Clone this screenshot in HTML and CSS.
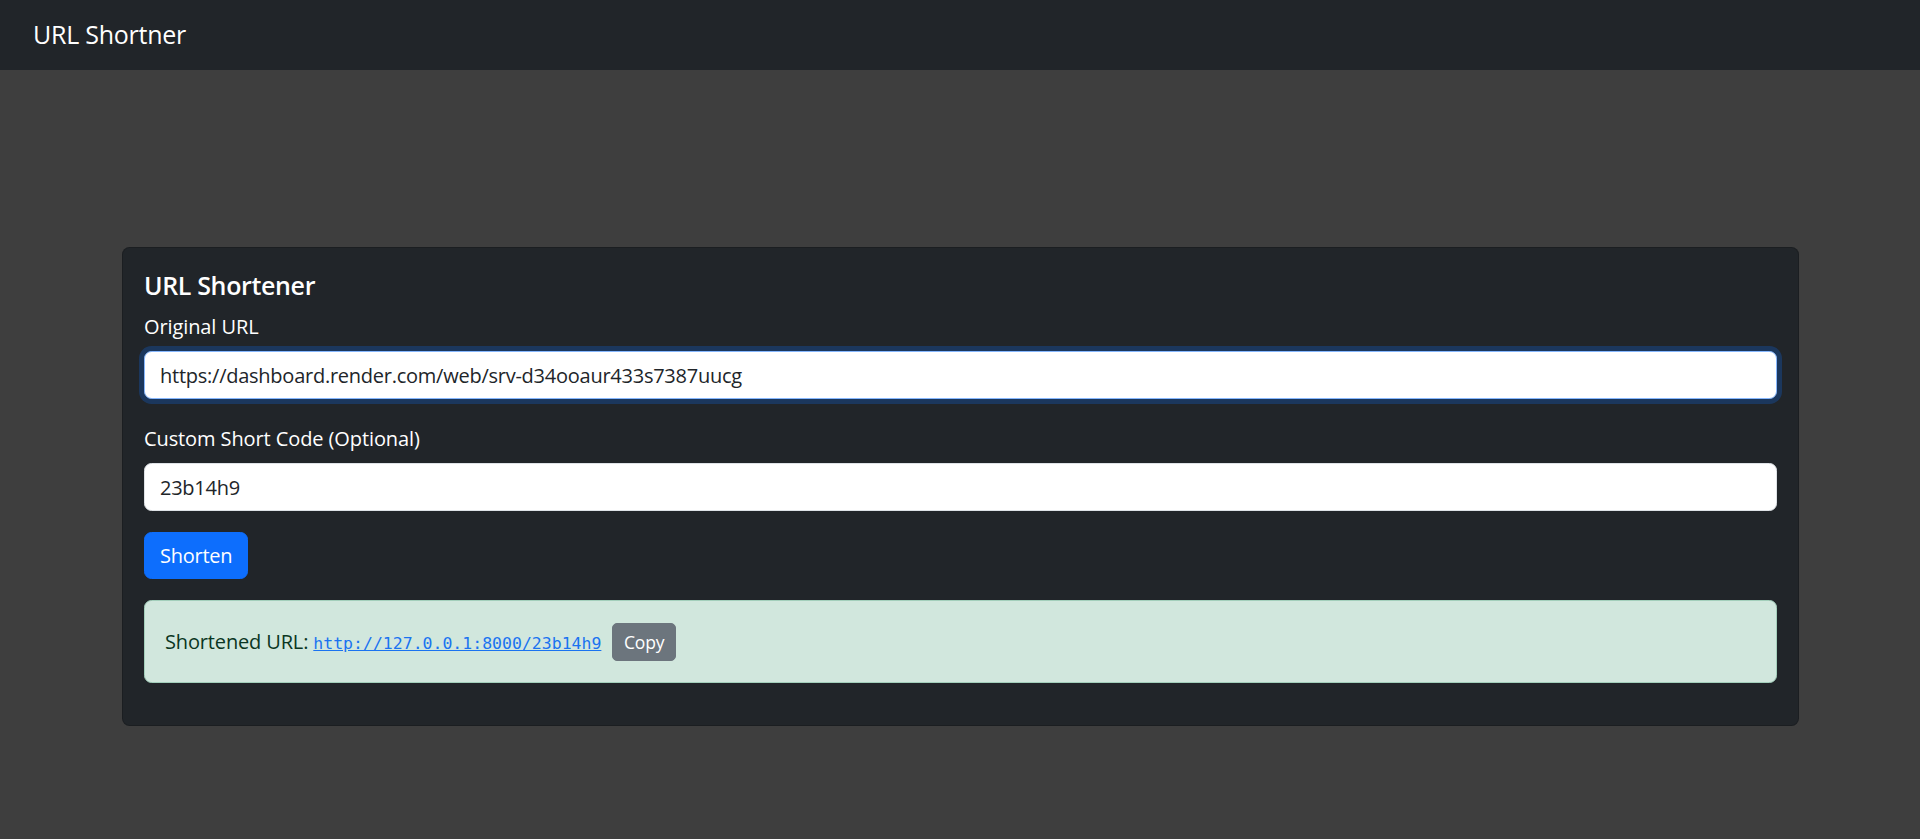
FILE: index.html
```html
<!DOCTYPE html>
<html lang="en">
<head>
<meta charset="utf-8">
<title>URL Shortner</title>
<link rel="stylesheet" href="styles.css">
</head>
<body>
<nav class="navbar">
  <span class="brand">URL Shortner</span>
</nav>
<main class="page">
  <section class="card">
    <h5 class="card-title">URL Shortener</h5>
    <form class="form">
      <div class="field field-first">
        <label class="label" for="orig">Original URL</label>
        <input class="input input-focus" id="orig" type="text" value="https://dashboard.render.com/web/srv-d34ooaur433s7387uucg">
      </div>
      <div class="field">
        <label class="label" for="code">Custom Short Code (Optional)</label>
        <input class="input" id="code" type="text" value="23b14h9">
      </div>
      <button type="button" class="btn btn-primary">Shorten</button>
    </form>
    <div class="alert">
      <span class="alert-text">Shortened URL: <a class="short-link" href="#">http://127.0.0.1:8000/23b14h9</a></span><button type="button" class="btn-copy">Copy</button>
    </div>
  </section>
</main>
</body>
</html>
```

FILE: styles.css
```css
* { box-sizing: border-box; }
html, body { margin: 0; padding: 0; }
body {
  background: #3e3e3e;
  font-family: "Open Sans", "Noto Sans", sans-serif;
  font-size: 20px;
  line-height: 1.5;
  letter-spacing: -0.25px;
  color: #fff;
  min-height: 839px;
}
.navbar {
  height: 70px;
  background: #212529;
  display: flex;
  align-items: center;
  padding-left: 33px;
}
.brand {
  font-size: 25px;
  line-height: 1.5;
  color: #fff;
}
.page {
  padding: 177px 121px 0 122px;
}
.card {
  background: #212529;
  border: 1px solid rgba(0,0,0,.175);
  border-radius: 7.5px;
  padding: 22px 21px 22px 21px;
  color: #fff;
}
.card-title {
  margin: 0 0 12px;
  font-size: 25px;
  line-height: 30px;
  font-weight: 600;
  letter-spacing: -0.35px;
}
.form { margin: 0; }
.field { margin-bottom: 25px; }
.field + .field { margin-bottom: 21px; }
.label {
  display: block;
  line-height: 30px;
  margin-bottom: 9px;
  letter-spacing: -0.1px;
}
.input {
  display: block;
  width: 100%;
  height: 48px;
  padding: 7.5px 15px;
  font: inherit;
  font-size: 20px;
  letter-spacing: -0.25px;
  color: #212529;
  background: #fff;
  border: 1.25px solid #dee2e6;
  border-radius: 7.5px;
  outline: none;
}
.input-focus {
  border-color: #86b7fe;
  box-shadow: 0 0 0 5px rgba(13,110,253,.25);
}
.btn {
  display: inline-block;
  font: inherit;
  font-size: 20px;
  letter-spacing: -0.25px;
  line-height: 30px;
  padding: 7.5px 15px;
  border: 1.25px solid transparent;
  border-radius: 7.5px;
  cursor: pointer;
}
.btn-primary {
  background: #0d6efd;
  border-color: #0d6efd;
  color: #fff;
}
.alert {
  display: flex;
  align-items: baseline;
  margin-top: 21px;
  margin-bottom: 20px;
  background: #d1e7dd;
  border: 1.25px solid #a3cfbb;
  border-radius: 7.5px;
  padding: 21.5px 20px;
  color: #0a3622;
  line-height: 30px;
  letter-spacing: -0.15px;
}
.short-link {
  font-family: "DejaVu Sans Mono", "Liberation Mono", monospace;
  font-size: 16.5px;
  letter-spacing: 0;
  color: #1a73f0;
  text-decoration: underline;
}
.btn-copy {
  display: inline-block;
  margin-left: 11px;
  font: inherit;
  font-size: 17.5px;
  letter-spacing: -0.1px;
  line-height: 26.25px;
  padding: 5px 10.5px;
  background: #6c757d;
  color: #fff;
  border: 1.25px solid #6c757d;
  border-radius: 5px;
}
```
